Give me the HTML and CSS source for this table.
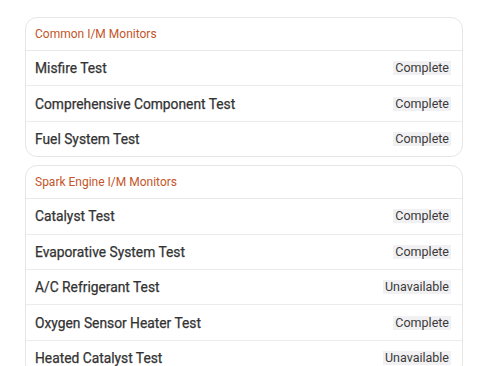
FILE: index.html
```html
<!DOCTYPE html>
<html>
<head>
<meta charset="utf-8">
<link rel="stylesheet" href="styles.css">
</head>
<body>
<main class="page">
  <section class="card">
    <div class="card-head">Common I/M Monitors</div>
    <div class="row"><span class="label">Misfire Test</span><span class="badge">Complete</span></div>
    <div class="row"><span class="label">Comprehensive Component Test</span><span class="badge">Complete</span></div>
    <div class="row"><span class="label">Fuel System Test</span><span class="badge">Complete</span></div>
  </section>
  <section class="card">
    <div class="card-head">Spark Engine I/M Monitors</div>
    <div class="row"><span class="label">Catalyst Test</span><span class="badge">Complete</span></div>
    <div class="row"><span class="label">Evaporative System Test</span><span class="badge">Complete</span></div>
    <div class="row"><span class="label">A/C Refrigerant Test</span><span class="badge">Unavailable</span></div>
    <div class="row"><span class="label">Oxygen Sensor Heater Test</span><span class="badge">Complete</span></div>
    <div class="row"><span class="label">Heated Catalyst Test</span><span class="badge">Unavailable</span></div>
  </section>
</main>
</body>
</html>
```
FILE: styles.css
```css
html, body {
  margin: 0;
  padding: 0;
  background: #ffffff;
}
body {
  font-family: Roboto, "Liberation Sans", sans-serif;
  color: #333333;
}
.page {
  padding: 17px 25px 0 25px;
  display: flex;
  flex-direction: column;
  gap: 8px;
}
.card {
  border: 1px solid #e6e6e6;
  border-radius: 12px;
  overflow: hidden;
}
.card-head {
  height: 32px;
  display: flex;
  align-items: center;
  padding: 0 9px;
  font-size: 12px;
  color: #c4552a;
  border-bottom: 1px solid #e8e8e8;
}
.row {
  height: 34.4px;
  display: flex;
  align-items: center;
  justify-content: space-between;
  padding: 0 11px 0 9px;
  border-bottom: 1px solid #ececec;
}
.row:last-child {
  border-bottom: none;
}
.label {
  font-size: 13.8px;
  font-weight: 400;
  color: #333333;
  -webkit-text-stroke: 0.25px #333333;
}
.badge {
  font-size: 12.5px;
  color: #3a3a3a;
  background: #f1f1f3;
  padding: 0 2px;
  line-height: 14px;
}
```
